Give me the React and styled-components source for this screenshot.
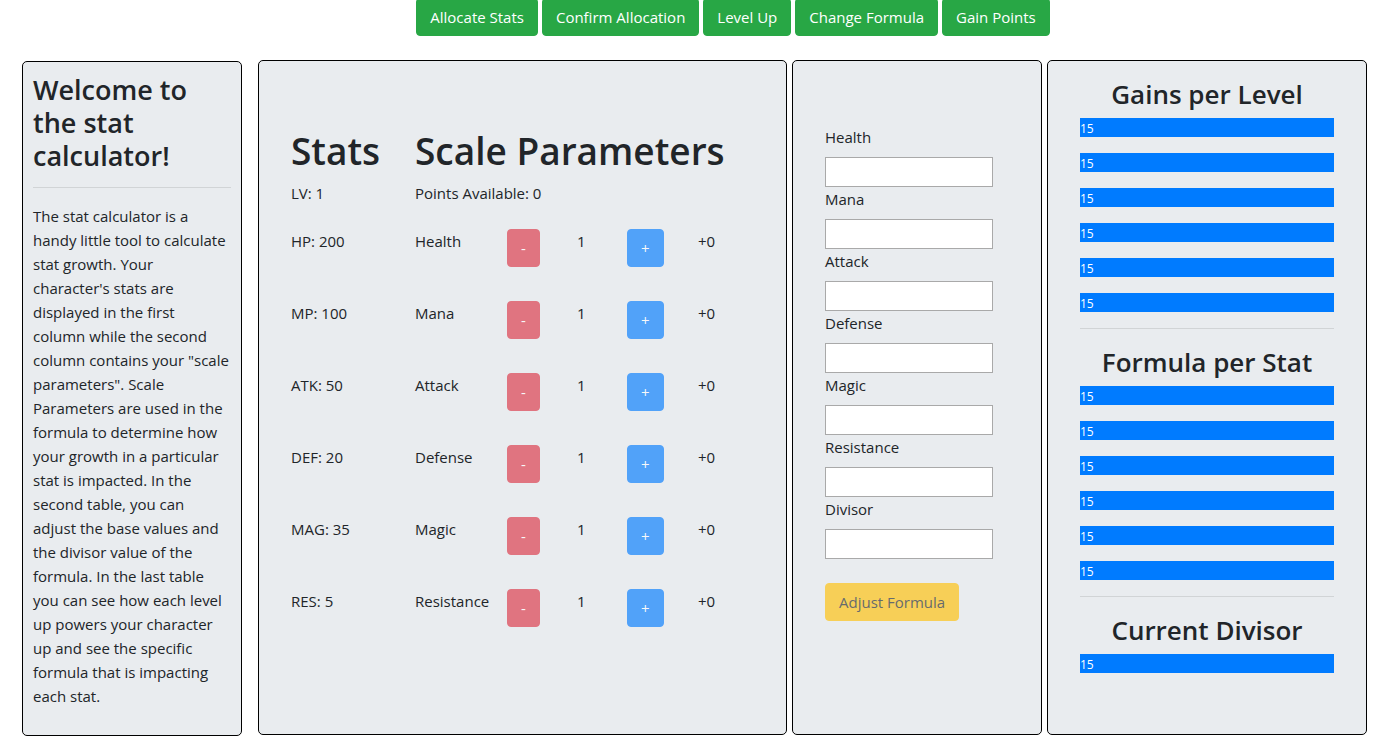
import React from "react";
import styled, { createGlobalStyle } from "styled-components";

const GlobalStyle = createGlobalStyle`
  *, *::before, *::after { box-sizing: border-box; }
  body {
    margin: 0;
    background: #fff;
    color: #212529;
    font-family: "Open Sans", "Noto Sans", sans-serif;
    font-size: 15px;
    line-height: 24px;
  }
`;

const Page = styled.div`
  padding: 0 19px 8px 22px;
`;

const Toolbar = styled.header`
  display: flex;
  justify-content: center;
  gap: 4px;
  margin-top: -2px;
  padding-left: 77px;
`;

const Button = styled.button`
  height: 38px;
  padding: 0 13px;
  border: 1px solid ${(p) => p.$color};
  border-radius: 4px;
  background: ${(p) => p.$color};
  color: ${(p) => p.$text || "#fff"};
  font: inherit;
  cursor: pointer;
  white-space: nowrap;
  &:disabled {
    opacity: 0.65;
    cursor: default;
  }
`;

const Columns = styled.div`
  display: flex;
  align-items: stretch;
  gap: 16px;
  padding-top: 24px;
`;

const Panel = styled.section`
  border: 1px solid #000;
  border-radius: 5px;
  background: #e9ecef;
`;

const Intro = styled(Panel).attrs({ as: "aside" })`
  flex: none;
  width: 220px;
  margin: 1px 0 -1px;
  padding: 10px 10px 11px;
`;

const Workspace = styled.main`
  flex: 1;
  display: grid;
  grid-template-columns: 1fr 250px 320px;
  gap: 5px;
`;

const Heading = styled.h2`
  margin: 0 0 7px;
  padding-top: 1px;
  font-size: ${(p) => (p.$centered ? 26 : 27)}px;
  font-weight: 600;
  line-height: 33px;
  text-align: ${(p) => (p.$centered ? "center" : "left")};
`;

const Rule = styled.hr`
  margin: 16px 0;
  border: 0;
  border-top: 1px solid rgba(0, 0, 0, 0.1);
`;

const IntroRule = styled(Rule)`
  margin-top: 15px;
`;

const Text = styled.p`
  margin: 0 0 16px;
`;

const StatsPanel = styled(Panel)`
  padding: 66px 32px 32px;
`;

const StatsTable = styled.table`
  width: 100%;
  border-collapse: collapse;
  table-layout: fixed;
`;

const Title = styled.th`
  height: 54px;
  padding: 0;
  font-size: 37px;
  font-weight: 600;
  line-height: 48px;
  text-align: left;
  vertical-align: top;
  white-space: nowrap;
`;

const Cell = styled.td`
  height: ${(p) => (p.$summary ? 48 : 72)}px;
  padding: 0;
  vertical-align: top;
  white-space: nowrap;
`;

const Col = styled.col`
  width: ${(p) => p.$width}px;
`;

const FormPanel = styled(Panel).attrs({ as: "form" })`
  padding: 64px 48px 32px 32px;
`;

const Field = styled.div`
  display: flex;
  flex-direction: column;
  gap: 8px;
`;

const Input = styled.input`
  width: 100%;
  height: 30px;
  padding: 1px 4px;
  border: 1px solid #a9a9a9;
  background: #fff;
  font: inherit;
`;

const Submit = styled(Button)`
  margin-top: 24px;
`;

const GainsPanel = styled(Panel)`
  padding: 16px 32px;
`;

const Bars = styled.ul`
  display: grid;
  gap: 16px;
  margin: 0;
  padding: 0;
  list-style: none;
`;

const Bar = styled.li`
  height: 19px;
  background: #007bff;
  color: #fff;
  font-size: 12px;
  line-height: 21px;
`;

const actions = ["Allocate Stats", "Confirm Allocation", "Level Up", "Change Formula", "Gain Points"];

const stats = [
  ["HP", 200, "Health"],
  ["MP", 100, "Mana"],
  ["ATK", 50, "Attack"],
  ["DEF", 20, "Defense"],
  ["MAG", 35, "Magic"],
  ["RES", 5, "Resistance"],
];

const fields = [...stats.map((s) => s[2]), "Divisor"];

const groups = [
  ["Gains per Level", 6],
  ["Formula per Stat", 6],
  ["Current Divisor", 1],
];

export default function App() {
  return (
    <>
      <GlobalStyle />
      <Page>
        <Toolbar>
          {actions.map((label) => (
            <Button key={label} type="button" $color="#28a745">{label}</Button>
          ))}
        </Toolbar>
        <Columns>
          <Intro>
            <Heading>Welcome to the stat calculator!</Heading>
            <IntroRule />
            <Text>
              The stat calculator is a handy little tool to calculate stat growth. Your
              character's stats are displayed in the first<br />column while the second column
              contains your "scale parameters". Scale Parameters are used in the formula to
              determine how your growth in a particular stat is impacted. In the second
              table, you can adjust the base values and the divisor value of the formula. In
              the last table you can see how each level up powers your character up and see
              the specific formula that is impacting each stat.
            </Text>
          </Intro>
          <Workspace>
            <StatsPanel>
              <StatsTable>
                <colgroup>
                  <Col $width={124} />
                  <Col $width={92} />
                  <Col $width={70} />
                  <Col $width={50} />
                  <Col $width={71} />
                  <Col />
                </colgroup>
                <thead>
                  <tr>
                    <Title scope="col">Stats</Title>
                    <Title scope="colgroup" colSpan={5}>Scale Parameters</Title>
                  </tr>
                </thead>
                <tbody>
                  <tr>
                    <Cell $summary>LV: 1</Cell>
                    <Cell $summary colSpan={5}>Points Available: 0</Cell>
                  </tr>
                  {stats.map(([code, value, name]) => (
                    <tr key={code}>
                      <Cell>{code}: {value}</Cell>
                      <Cell>{name}</Cell>
                      <Cell>
                        <Button type="button" disabled $color="#dc3545" aria-label={`Decrease ${name}`}>-</Button>
                      </Cell>
                      <Cell>1</Cell>
                      <Cell>
                        <Button type="button" disabled $color="#007bff" aria-label={`Increase ${name}`}>+</Button>
                      </Cell>
                      <Cell>+0</Cell>
                    </tr>
                  ))}
                </tbody>
              </StatsTable>
            </StatsPanel>
            <FormPanel>
              {fields.map((name) => (
                <Field key={name}>
                  <label htmlFor={`base-${name}`}>{name}</label>
                  <Input id={`base-${name}`} type="text" />
                </Field>
              ))}
              <Submit type="submit" disabled $color="#ffc107" $text="#212529">Adjust Formula</Submit>
            </FormPanel>
            <GainsPanel>
              {groups.map(([title, count], i) => (
                <React.Fragment key={title}>
                  {i > 0 && <Rule />}
                  <Heading $centered>{title}</Heading>
                  <Bars>
                    {Array.from({ length: count }, (_, n) => <Bar key={n}>15</Bar>)}
                  </Bars>
                </React.Fragment>
              ))}
            </GainsPanel>
          </Workspace>
        </Columns>
      </Page>
    </>
  );
}
